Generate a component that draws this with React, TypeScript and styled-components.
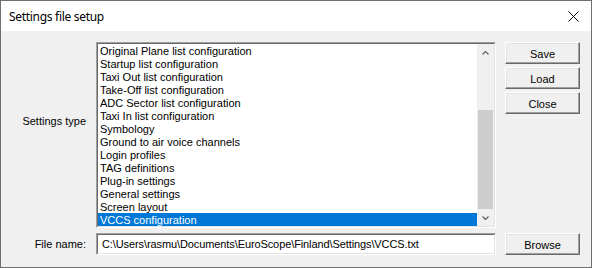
import styled, { createGlobalStyle } from "styled-components";

const GlobalStyle = createGlobalStyle`
  html, body {
    margin: 0;
    padding: 0;
    background: #ffffff;
  }
  body {
    font-family: "Liberation Sans", Arial, sans-serif;
    font-size: 11px;
  }
`;

const settingsTypes = [
  "Original Plane list configuration",
  "Startup list configuration",
  "Taxi Out list configuration",
  "Take-Off list configuration",
  "ADC Sector list configuration",
  "Taxi In list configuration",
  "Symbology",
  "Ground to air voice channels",
  "Login profiles",
  "TAG definitions",
  "Plug-in settings",
  "General settings",
  "Screen layout",
  "VCCS configuration",
];

const Window = styled.div`
  width: 592px;
  height: 268px;
  box-sizing: border-box;
  border: 1px solid #707070;
  background: #f0f0f0;
  display: flex;
  flex-direction: column;
  color: #000;
`;

const TitleBar = styled.div`
  height: 30px;
  background: #ffffff;
  display: flex;
  align-items: center;
  justify-content: space-between;
  padding: 0 0 0 8px;
  flex-shrink: 0;
`;

const Title = styled.span`
  font-family: "Noto Sans", "Open Sans", sans-serif;
  font-size: 12px;
  letter-spacing: -0.3px;
  margin-top: 1px;
`;

const CloseBox = styled.div`
  width: 46px;
  height: 30px;
  display: flex;
  align-items: center;
  justify-content: center;
  margin-right: -5px;
`;

const Body = styled.div`
  flex: 1;
  display: flex;
  flex-direction: column;
  gap: 5px;
  padding: 11px 0 0 0;
`;

const Row = styled.div<{ $align?: string }>`
  display: flex;
  align-items: ${(p) => p.$align ?? "flex-start"};
`;

const Label = styled.div<{ $top?: number }>`
  width: 95px;
  box-sizing: border-box;
  padding-right: 10px;
  text-align: right;
  font-family: "Liberation Sans", Arial, sans-serif;
  font-size: 11px;
  align-self: ${(p) => (p.$top ? "flex-start" : "center")};
  margin-top: ${(p) => (p.$top ? `${p.$top}px` : "0")};
`;

const SunkenBox = styled.div`
  box-sizing: border-box;
  width: 400px;
  border-style: solid;
  border-width: 1px;
  border-color: #a0a0a0 #ffffff #ffffff #a0a0a0;
  background: #ffffff;
`;

const ListBox = styled(SunkenBox)`
  height: 186px;
  display: flex;
`;

const ListInner = styled.div`
  flex: 1;
  display: flex;
  border-style: solid;
  border-width: 1px;
  border-color: #696969 #e3e3e3 #e3e3e3 #696969;
`;

const Items = styled.div`
  flex: 1;
  display: flex;
  flex-direction: column;
`;

const Item = styled.div<{ $selected?: boolean }>`
  box-sizing: border-box;
  height: 13px;
  padding-top: 1px;
  line-height: 13px;
  padding-left: 2px;
  white-space: nowrap;
  background: ${(p) => (p.$selected ? "#0078d7" : "transparent")};
  color: ${(p) => (p.$selected ? "#ffffff" : "#000000")};
`;

const ScrollBar = styled.div`
  width: 17px;
  background: #f0f0f0;
  display: flex;
  flex-direction: column;
`;

const Arrow = styled.div`
  height: 17px;
  display: flex;
  align-items: center;
  justify-content: center;
`;

const Track = styled.div`
  flex: 1;
  display: flex;
  flex-direction: column;
  justify-content: flex-end;
`;

const Thumb = styled.div`
  height: 99px;
  margin: 0 1px;
  background: #cdcdcd;
`;

const ButtonColumn = styled.div`
  display: flex;
  flex-direction: column;
  gap: 3px;
  margin-left: 9px;
`;

const Button = styled.div`
  box-sizing: border-box;
  width: 75px;
  height: 22px;
  background: #f0f0f0;
  border-style: solid;
  border-width: 1px;
  border-color: #ffffff #696969 #696969 #ffffff;
  box-shadow: inset -1px -1px 0 #a0a0a0, inset 1px 1px 0 #e3e3e3;
  display: flex;
  align-items: center;
  justify-content: center;
  font-size: 11px;
  padding-top: 1px;
`;

const TextField = styled(SunkenBox)`
  height: 22px;
  display: flex;
`;

const TextInner = styled.div`
  flex: 1;
  border-style: solid;
  border-width: 1px;
  border-color: #696969 #e3e3e3 #e3e3e3 #696969;
  display: flex;
  align-items: center;
  padding-left: 4px;
  white-space: nowrap;
  letter-spacing: -0.1px;
`;

const Chevron = ({ up }: { up?: boolean }) => (
  <svg width="7" height="4" viewBox="0 0 7 4">
    <polyline
      points={up ? "0.5,3.5 3.5,0.5 6.5,3.5" : "0.5,0.5 3.5,3.5 6.5,0.5"}
      fill="none"
      stroke="#606060"
      strokeWidth="1.2"
    />
  </svg>
);

const App = () => {
  return (
    <>
      <GlobalStyle />
      <Window>
        <TitleBar>
          <Title>Settings file setup</Title>
          <CloseBox>
            <svg width="11" height="11" viewBox="0 0 11 11">
              <path d="M0.5 0.5 L10.5 10.5 M10.5 0.5 L0.5 10.5" stroke="#000" strokeWidth="1" />
            </svg>
          </CloseBox>
        </TitleBar>
        <Body>
          <Row>
            <Label $top={73}>Settings type</Label>
            <ListBox>
              <ListInner>
                <Items>
                  {settingsTypes.map((t) => (
                    <Item key={t} $selected={t === "VCCS configuration"}>
                      {t}
                    </Item>
                  ))}
                </Items>
                <ScrollBar>
                  <Arrow>
                    <Chevron up />
                  </Arrow>
                  <Track>
                    <Thumb />
                  </Track>
                  <Arrow>
                    <Chevron />
                  </Arrow>
                </ScrollBar>
              </ListInner>
            </ListBox>
            <ButtonColumn>
              <Button>Save</Button>
              <Button>Load</Button>
              <Button>Close</Button>
            </ButtonColumn>
          </Row>
          <Row $align="center">
            <Label>File name:</Label>
            <TextField>
              <TextInner>C:\Users\rasmu\Documents\EuroScope\Finland\Settings\VCCS.txt</TextInner>
            </TextField>
            <ButtonColumn>
              <Button>Browse</Button>
            </ButtonColumn>
          </Row>
        </Body>
      </Window>
    </>
  );
};

export default App;
